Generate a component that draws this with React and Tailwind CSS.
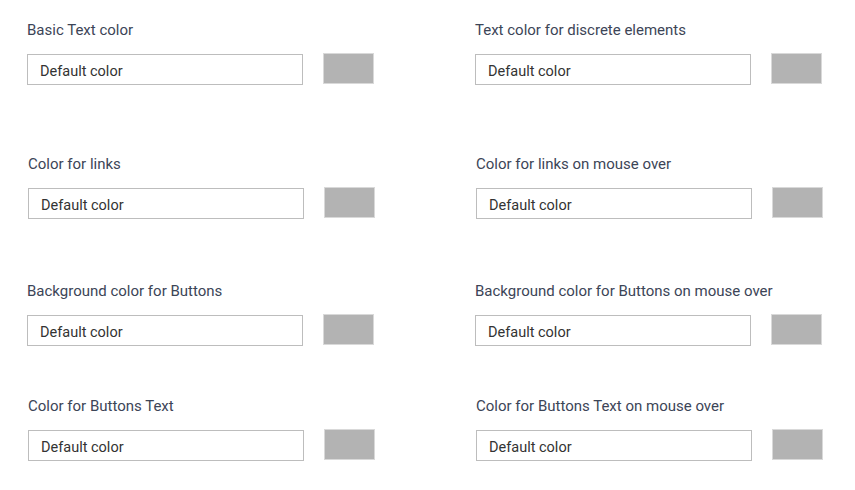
const rows = [
  { left: 'Basic Text color', right: 'Text color for discrete elements', top: 'mt-[20px]', shift: '' },
  { left: 'Color for links', right: 'Color for links on mouse over', top: 'mt-[69px]', shift: 'ml-px' },
  { left: 'Background color for Buttons', right: 'Background color for Buttons on mouse over', top: 'mt-[62px]', shift: '' },
  { left: 'Color for Buttons Text', right: 'Color for Buttons Text on mouse over', top: 'mt-[50px]', shift: 'ml-px' },
];

const ColorField = ({ label }) => (
  <div className="w-[448px] shrink-0">
    <div className="text-[15px] leading-[20px] text-[#3c4557]">{label}</div>
    <div className="flex items-start mt-[14px]">
      <div className="w-[276px] h-[31px] shrink-0 border border-[#bdbdbd] bg-white pl-[12px] pt-[8px] text-[14.5px] leading-[18px] text-[#333]">
        Default color
      </div>
      <div className="ml-[20px] -mt-px w-[51px] h-[31px] shrink-0 bg-[#b3b3b3] border border-[#d9d9d9]" />
    </div>
  </div>
);

const App = () => {
  return (
    <div className="w-[855px] h-[490px] bg-white pl-[27px] overflow-hidden" style={{ fontFamily: 'Roboto, "Noto Sans", sans-serif' }}>
      {rows.map((row, i) => (
        <div key={i} className={`flex ${row.top} ${row.shift}`}>
          <ColorField label={row.left} />
          <ColorField label={row.right} />
        </div>
      ))}
    </div>
  );
};

export default App;
